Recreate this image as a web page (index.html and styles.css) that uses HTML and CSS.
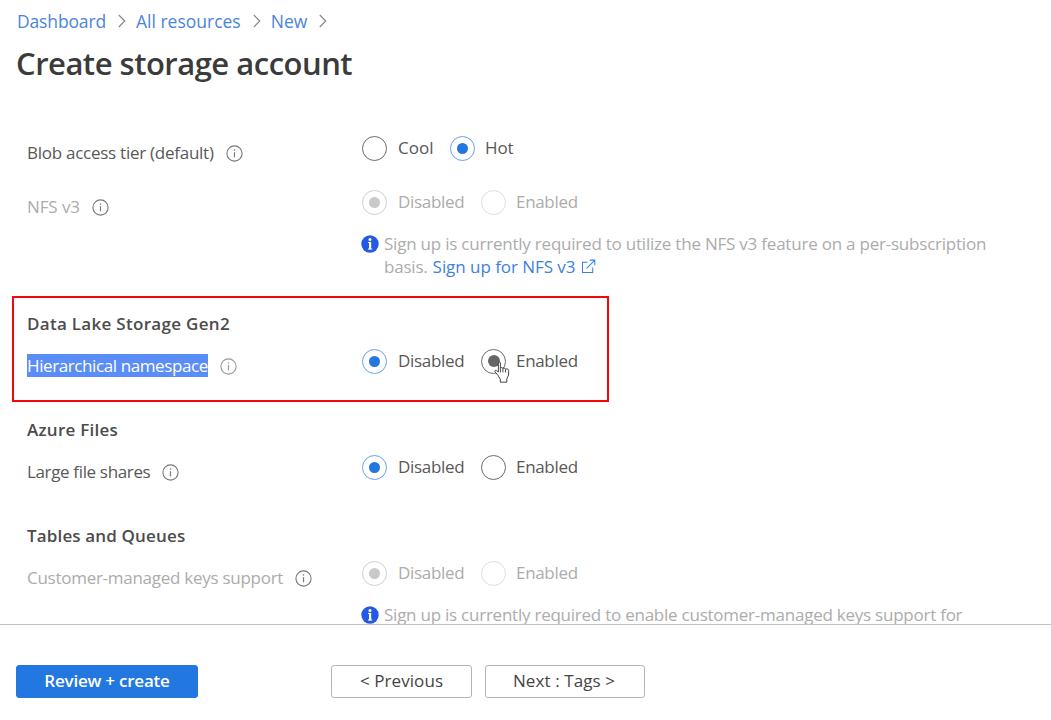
FILE: index.html
```
<!DOCTYPE html>
<html lang="en">
<head>
<meta charset="utf-8">
<title>Create storage account</title>
<link rel="stylesheet" href="styles.css">
</head>
<body>
<svg class="defs" width="0" height="0" aria-hidden="true">
  <symbol id="info" viewBox="0 0 17 17"><circle cx="8.5" cy="8.5" r="7.6" fill="none" stroke="currentColor" stroke-width="1.1"/><path d="M8.5 7.2v5.1" stroke="currentColor" stroke-width="1.2"/><circle cx="8.5" cy="5" r=".8" fill="currentColor"/></symbol>
  <symbol id="notice" viewBox="0 0 18 18"><circle cx="9" cy="9" r="8.7" fill="#2459e4"/><circle cx="9" cy="4.5" r="1.5" fill="#fff"/><path d="M7 7.4h3M7 14h4.2" fill="none" stroke="#fff" stroke-width="1"/><path d="M9.1 7v7.4" stroke="#fff" stroke-width="2.2"/></symbol>
  <symbol id="chevron" viewBox="0 0 8 14"><path d="M.8 1l6 6-6 6" fill="none" stroke="currentColor" stroke-width="1.1"/></symbol>
</svg>
<main class="page">
  <nav class="crumbs">
    <a class="crumb-dashboard">Dashboard</a><svg class="chevron"><use href="#chevron"/></svg>
    <a class="crumb-resources">All resources</a><svg class="chevron"><use href="#chevron"/></svg>
    <a class="crumb-new">New</a><svg class="chevron"><use href="#chevron"/></svg>
  </nav>
  <h1 class="title">Create storage account</h1>

  <section class="form">
    <div class="row">
      <div class="label"><span class="t-blob">Blob access tier (default)</span><svg class="info"><use href="#info"/></svg></div>
      <div class="options">
        <label class="option cool"><span class="radio"></span><span class="t-cool">Cool</span></label>
        <label class="option"><span class="radio on"></span><span class="t-hot">Hot</span></label>
      </div>
    </div>
    <div class="row row-nfs muted">
      <div class="label"><span class="t-nfs">NFS v3</span><svg class="info"><use href="#info"/></svg></div>
      <div class="options">
        <label class="option first"><span class="radio on"></span><span class="t-option">Disabled</span></label>
        <label class="option"><span class="radio"></span><span class="t-option">Enabled</span></label>
      </div>
    </div>
    <div class="notice notice-nfs">
      <svg class="notice-icon"><use href="#notice"/></svg>
      <p class="notice-text"><span class="t-notice">Sign up is currently required to utilize the NFS v3 feature on a per-subscription</span><br><span class="t-basis">basis.</span><a class="t-signup">Sign up for NFS v3</a><svg class="external" viewBox="0 0 16 16"><path d="M7 3.5H1.6v10.9h10.9V9M9.3 1.2h5.4v5.4M14.5 1.4L6 9.9" fill="none" stroke="currentColor" stroke-width="1.1"/></svg></p>
    </div>

    <section class="group highlight">
      <h2 class="heading t-lake">Data Lake Storage Gen2</h2>
      <div class="row">
        <div class="label"><span class="t-hier selected">Hierarchical namespace</span><svg class="info"><use href="#info"/></svg></div>
        <div class="options">
          <label class="option first"><span class="radio on"></span><span class="t-option">Disabled</span></label>
          <label class="option"><span class="radio hover"><svg class="cursor" viewBox="0 0 16 22"><path d="M4.2 14.6L1 10.8c-.8-1.2.7-2 1.6-1.1l1.8 1.3V2c0-1.3 2-1.3 2 0v5.2c.2-1 2.5-.9 2.5.5.3-.9 2.6-.8 2.6.6.4-.8 3.1-.6 3.1 1v4.7l-1.8 4v3.2H6.3v-2.9zM6.4 7.2v4.2M8.9 7.7v3.7M11.5 8.3v3.1" fill="#fff" stroke="#333" stroke-width=".9"/></svg></span><span class="t-option">Enabled</span></label>
        </div>
      </div>
    </section>

    <section class="group files">
      <h2 class="heading t-files">Azure Files</h2>
      <div class="row">
        <div class="label"><span class="t-large">Large file shares</span><svg class="info"><use href="#info"/></svg></div>
        <div class="options">
          <label class="option first"><span class="radio on"></span><span class="t-option">Disabled</span></label>
          <label class="option"><span class="radio"></span><span class="t-option">Enabled</span></label>
        </div>
      </div>
    </section>

    <section class="group tables">
      <h2 class="heading t-tables">Tables and Queues</h2>
      <div class="row muted">
        <div class="label"><span class="t-keys">Customer-managed keys support</span><svg class="info"><use href="#info"/></svg></div>
        <div class="options">
          <label class="option first"><span class="radio on"></span><span class="t-option">Disabled</span></label>
          <label class="option"><span class="radio"></span><span class="t-option">Enabled</span></label>
        </div>
      </div>
      <div class="notice notice-keys">
        <svg class="notice-icon"><use href="#notice"/></svg>
        <p class="notice-text"><span class="t-notice-keys">Sign up is currently required to enable customer-managed keys support for</span></p>
      </div>
    </section>
  </section>
</main>
<footer class="footer">
  <button class="btn primary">Review + create</button>
  <button class="btn previous">&lt; Previous</button>
  <button class="btn next">Next : Tags &gt;</button>
</footer>
</body>
</html>
```

FILE: styles.css
```
* { box-sizing: border-box; }
body {
  margin: 0;
  height: 720px;
  display: flex;
  flex-direction: column;
  overflow: hidden;
  background: #fff;
  color: #585858;
  font: 17px/26px "Open Sans", "Noto Sans", sans-serif;
}
h1, h2, p { margin: 0; }
svg { flex: none; }
.defs { display: block; position: absolute; }
.page { height: 624px; flex: none; overflow: hidden; }

.crumbs {
  display: flex;
  align-items: center;
  height: 26px;
  margin-top: 8px;
  padding-left: 17px;
  color: #4a84dc;
  font-size: 17.5px;
}
.chevron { width: 8px; height: 14px; color: #858585; margin: 0 10px 1px 12px; }
.crumb-dashboard { letter-spacing: -0.15px; }
.crumb-resources { letter-spacing: 0; }
.crumb-new { letter-spacing: 0; }
.title {
  height: 44px;
  margin-top: 7px;
  padding-left: 16px;
  color: #3b3b3b;
  font-size: 31px;
  font-weight: 600;
  line-height: 44px;
  letter-spacing: -0.5px;
}

.form { padding-top: 50px; }
.row {
  display: grid;
  grid-template-columns: 335px 1fr;
  align-items: start;
  padding-left: 27px;
}
.form > .row-nfs { margin-top: 23px; }
.label {
  display: flex;
  align-items: center;
  gap: 12px;
  height: 26px;
  margin-top: 5px;
}
.info { width: 17px; height: 17px; color: #777; }
.options { display: flex; height: 26px; }
.option { display: flex; align-items: center; gap: 10px; }
.option.first { width: 119px; gap: 11px; }
.option.cool { width: 88px; gap: 11px; }
.radio {
  position: relative;
  display: grid;
  place-items: center;
  width: 25px;
  height: 25px;
  border: 1px solid #6b6b6b;
  border-radius: 50%;
}
.radio.on { border-color: #6a9ff0; }
.radio.on::before, .radio.hover::before {
  content: "";
  width: 11px;
  height: 11px;
  border-radius: 50%;
  background: #2377dd;
}
.radio.hover::before { width: 12px; height: 12px; background: #666; }
.cursor { position: absolute; left: 12px; top: 11px; width: 16px; height: 22px; }

.muted { color: #acacac; }
.muted .radio { border-color: #dedede; }
.muted .radio.on { border-color: #d0d0d0; }
.muted .radio.on::before { background: #c9c9c9; }

.notice {
  display: flex;
  gap: 5px;
  padding-left: 361px;
  color: #acacac;
}
.notice-nfs { margin-top: 12px; height: 46px; }
.notice-keys { margin-top: 12px; }
.notice-icon { width: 18px; height: 18px; margin-top: 3px; }
.notice-text { line-height: 23px; white-space: nowrap; }
.external { width: 15px; height: 15px; margin-left: 6px; vertical-align: -1px; color: #3d7fe0; }

.heading { color: #4c4c4c; font-size: 17px; font-weight: 600; line-height: 26px; }
.highlight {
  width: 597px;
  height: 106px;
  margin: 18px 0 0 12px;
  padding-top: 13px;
  border: 2px solid #f60606;
}
.highlight .heading { padding-left: 13px; }
.highlight .row { padding-left: 13px; margin-top: 11px; }
.highlight .info { color: #999; }
.selected {
  height: 23px;
  margin-top: -2px;
  line-height: 24px;
  background: #5a8df8;
  color: #fff;
}
.files, .tables { margin-top: 15px; }
.files .heading, .tables .heading { padding-left: 27px; }
.files .row { margin-top: 11px; }
.tables { margin-top: 38px; }
.tables .row { margin-top: 11px; }

.t-blob { letter-spacing: -0.26px; }
.t-nfs { letter-spacing: -0.1px; }
.t-cool { letter-spacing: 0; }
.t-hot { letter-spacing: -0.15px; }
.t-option { letter-spacing: -0.32px; }
.t-notice { letter-spacing: -0.22px; }
.t-notice-keys { letter-spacing: -0.24px; }
.t-basis { letter-spacing: -0.2px; margin-right: 5px; }
.t-signup { letter-spacing: -0.05px; color: #3d7fe0; }
.t-lake { letter-spacing: 0.3px; }
.t-hier { letter-spacing: -0.4px; }
.t-files { letter-spacing: 0.24px; }
.t-large { letter-spacing: -0.35px; }
.t-tables { letter-spacing: 0.15px; }
.t-keys { letter-spacing: -0.27px; }

.footer {
  display: flex;
  align-items: flex-start;
  height: 96px;
  padding: 40px 0 0 16px;
  border-top: 1px solid #c2c2c2;
}
.btn {
  height: 33px;
  padding: 0 0 2px;
  border: 1px solid #b5b5b5;
  border-radius: 3px;
  background: #fff;
  color: #444;
  font: 17px/26px "Open Sans", "Noto Sans", sans-serif;
}
.primary {
  width: 182px;
  border-color: #2377e0;
  background: #2377e0;
  color: #fff;
  font-weight: 600;
  letter-spacing: -0.22px;
}
.previous { width: 141px; margin-left: 133px; letter-spacing: 0.07px; }
.next { width: 160px; margin-left: 13px; padding-right: 2px; letter-spacing: 0.09px; }
```
